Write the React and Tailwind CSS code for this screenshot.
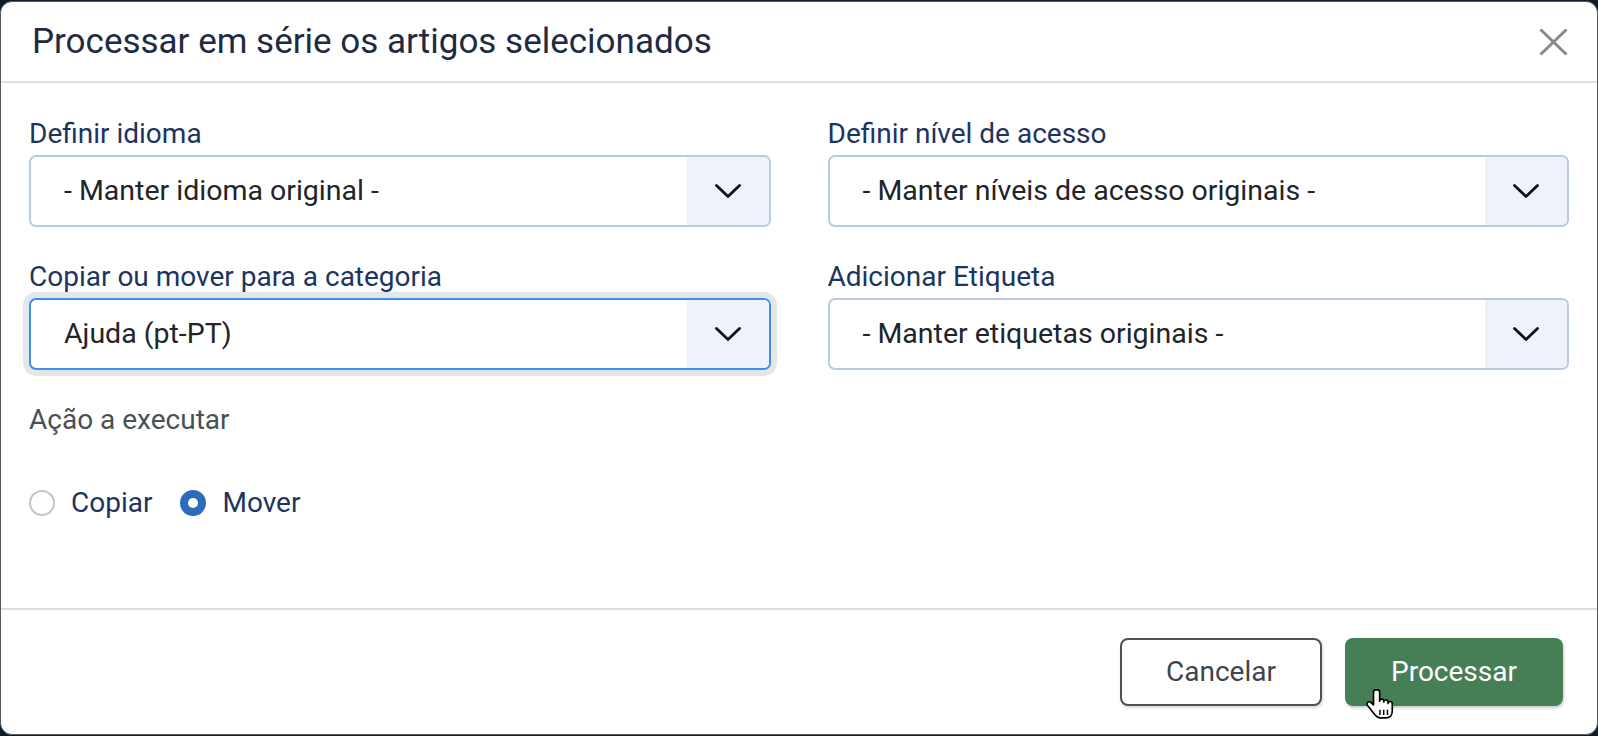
import React, { useState } from 'react';

const Chevron = () => (
  <svg width="26" height="14" viewBox="0 0 26 14" fill="none">
    <path d="M1.5 1.5 L13 12.5 L24.5 1.5" stroke="#111" strokeWidth="2.8" strokeLinecap="round" strokeLinejoin="round" />
  </svg>
);

const HandCursor = () => (
  <svg width="30" height="33" viewBox="0 0 20 22" fill="none">
    <path
      d="M6.5 1.2c-.9 0-1.5.7-1.5 1.5v8.6l-1.6-1.6c-.7-.7-1.8-.7-2.4 0-.5.6-.4 1.4.1 2l4.4 5.6c1 1.3 2.2 2.6 4 2.6h4c2.5 0 4-2 4-4.5v-5c0-.8-.6-1.4-1.4-1.4-.8 0-1.4.6-1.4 1.4v-1c0-.8-.6-1.4-1.4-1.4-.8 0-1.4.6-1.4 1.4v-.6c0-.8-.6-1.4-1.4-1.4-.8 0-1.4.6-1.4 1.4V2.7c0-.8-.6-1.5-1.5-1.5z"
      fill="#fff"
      stroke="#000"
      strokeWidth="1.1"
      strokeLinejoin="round"
    />
    <path d="M9.3 14.5v3.5M11.8 14.5v3.5M14.3 14.5v3.5" stroke="#000" strokeWidth="1" />
  </svg>
);

// select box with the chevron block on the right
const SelectBox = ({ value, focused }) => (
  <div
    className={`flex h-[72px] w-full items-stretch overflow-hidden rounded-[7px] border-2 bg-white ${
      focused ? 'border-[#3d8ef0] shadow-[0_0_0_6px_#e6e6e6]' : 'border-[#bccadf]'
    }`}
  >
    <div className="flex flex-1 items-center pl-[33px] text-[28.5px] text-[#212529]">{value}</div>
    <div className="flex w-[82px] items-center justify-center bg-[#eef3fa]">
      <Chevron />
    </div>
  </div>
);

const Field = ({ label, value, focused }) => (
  <div className="flex flex-col">
    <label className="text-[28px] leading-[42px] text-[#1c3560]">{label}</label>
    <SelectBox value={value} focused={focused} />
  </div>
);

const Radio = ({ checked, label, onClick }) => (
  <button type="button" onClick={onClick} className="flex items-center">
    {checked ? (
      <span className="flex h-[26px] w-[26px] items-center justify-center rounded-full bg-[#2d6bbd]">
        <span className="h-[10px] w-[10px] rounded-full bg-white" />
      </span>
    ) : (
      <span className="h-[26px] w-[26px] rounded-full border-2 border-[#c4c4c4] bg-white" />
    )}
    <span className="ml-[16px] text-[28px] leading-[42px] text-[#1c3560]">{label}</span>
  </button>
);

const App = () => {
  const [action, setAction] = useState('m');

  return (
    <div className="h-[736px] w-full overflow-hidden bg-[#101b29] pt-px font-['Roboto',sans-serif]">
      <div className="flex h-[734px] flex-col rounded-[12px] border border-[#555b63] bg-white">
        {/* Header */}
        <div className="flex h-[81px] items-center justify-between border-b-2 border-[#dadfe5] pl-[31px] pr-[29px]">
          <h1 className="text-[35px] leading-none text-[#1e2b42]">Processar em série os artigos selecionados</h1>
          <button type="button" className="flex items-center justify-center">
            <svg width="29" height="28" viewBox="0 0 29 28">
              <path d="M1.5 1.5 L27.5 26.5 M27.5 1.5 L1.5 26.5" stroke="#8a8a8a" strokeWidth="3" />
            </svg>
          </button>
        </div>

        {/* Body */}
        <div className="flex-1 px-[28px] pt-[30px]">
          <div className="grid grid-cols-2 gap-x-[57px] gap-y-[29px]">
            <Field label="Definir idioma" value="- Manter idioma original -" />
            <Field label="Definir nível de acesso" value="- Manter níveis de acesso originais -" />
            <Field label="Copiar ou mover para a categoria" value="Ajuda (pt-PT)" focused />
            <Field label="Adicionar Etiqueta" value="- Manter etiquetas originais -" />
          </div>

          <div className="mt-[29px] text-[28px] leading-[42px] text-[#495057]">Ação a executar</div>

          <div className="mt-[41px] flex items-center gap-[28px]">
            <Radio label="Copiar" checked={action === 'c'} onClick={() => setAction('c')} />
            <Radio label="Mover" checked={action === 'm'} onClick={() => setAction('m')} />
          </div>
        </div>

        {/* Footer */}
        <div className="flex h-[126px] items-center justify-end gap-[23px] border-t-2 border-[#dadfe5] pr-[34px]">
          <button
            type="button"
            className="h-[68px] w-[202px] rounded-[8px] border-2 border-[#4b525b] bg-white text-[28px] text-[#3e454e] shadow-[1px_2px_3px_rgba(0,0,0,0.15)]"
          >
            Cancelar
          </button>
          <button
            type="button"
            className="relative h-[68px] w-[218px] rounded-[8px] bg-[#467f56] text-[28px] text-white shadow-[1px_2px_3px_rgba(0,0,0,0.2)]"
          >
            Processar
            <span className="absolute left-[21px] top-[50px]">
              <HandCursor />
            </span>
          </button>
        </div>
      </div>
    </div>
  );
};

export default App;
